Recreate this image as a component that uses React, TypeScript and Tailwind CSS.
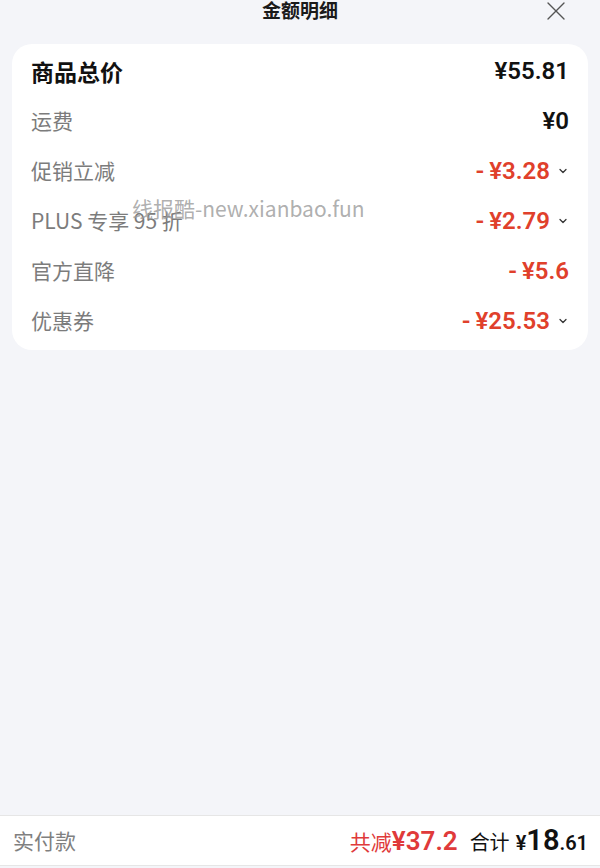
import { ChevronDown, X } from "lucide-react";

const rows = [
  { label: "运费", value: "¥0", red: false, more: false },
  { label: "促销立减", value: "-¥3.28", red: true, more: true },
  { label: "PLUS 专享 95 折", value: "-¥2.79", red: true, more: true },
  { label: "官方直降", value: "-¥5.6", red: true, more: false },
  { label: "优惠券", value: "-¥25.53", red: true, more: true },
];

const cjk = "font-['Noto_Sans_CJK_SC','Noto_Sans',sans-serif]";
const num = "font-['Roboto','Noto_Sans_CJK_SC',sans-serif]";

export default function App() {
  return (
    <div className={`relative flex h-[868px] w-[600px] flex-col bg-[#f4f5f9] ${cjk}`}>
      <header className="relative flex h-[44px] items-start justify-center">
        <h1 className="mt-[-3px] text-[19px] font-bold leading-[26px] text-[#1a1a1a]">金额明细</h1>
        <X className="absolute right-[28px] top-[-5px] h-[32px] w-[32px] text-[#555]" strokeWidth={1} />
      </header>

      <section className="mx-3 rounded-[20px] bg-white pb-[4px] pl-[19px] pr-[19px] pt-[2px]">
        <div className="flex h-[50px] items-center justify-between">
          <span className="text-[23px] font-bold leading-none text-[#111]">商品总价</span>
          <span className={`${num} text-[24px] font-semibold text-[#111]`}>¥55.81</span>
        </div>
        {rows.map((row) => (
          <div key={row.label} className="flex h-[50px] items-center justify-between">
            <span className="text-[21px] text-[#7c7c7c]">{row.label}</span>
            <span className="flex items-center">
              <span
                className={`${num} text-[24px] font-semibold ${row.red ? "text-[#e0402b]" : "text-[#111]"}`}
              >
                {row.value.startsWith("-") ? (
                  <>
                    -<span className="ml-[5px]">{row.value.slice(1)}</span>
                  </>
                ) : (
                  row.value
                )}
              </span>
              {row.more && <ChevronDown className="ml-[7px] h-[12px] w-[12px] text-[#333]" strokeWidth={2.5} />}
            </span>
          </div>
        ))}
      </section>

      <div className="pointer-events-none absolute left-[132px] top-[193px] text-[21px] text-[#9a9a9a]/80">
        线报酷-new.xianbao.fun
      </div>

      <div className="flex-1" />

      <footer className="mb-[2px] flex h-[51px] items-center justify-between border-y border-[#e6e6e6] bg-white pl-[13px] pr-3">
        <span className="text-[21px] text-[#808080]">实付款</span>
        <div className="flex items-baseline">
          <span className="text-[21px] text-[#e03a3a]">共减</span>
          <span className={`${num} text-[26px] font-semibold text-[#e03a3a]`}>¥37.2</span>
          <span className="ml-3 text-[20px] text-[#111]">合计</span>
          <span className={`${num} ml-[6px] text-[20px] font-semibold text-[#111]`}>¥</span>
          <span className={`${num} text-[29px] font-semibold text-[#111]`}>18</span>
          <span className={`${num} text-[20px] font-semibold text-[#111]`}>.61</span>
        </div>
      </footer>
    </div>
  );
}
